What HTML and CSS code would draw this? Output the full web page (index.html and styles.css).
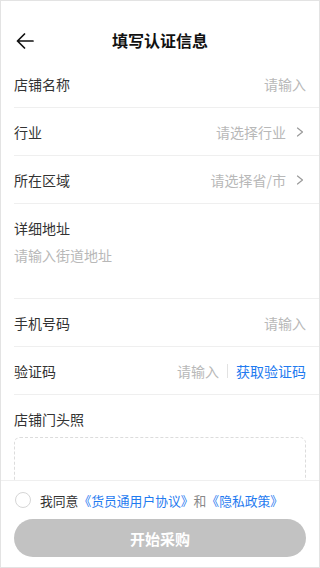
FILE: index.html
```html
<!DOCTYPE html>
<html lang="zh-CN">
<head>
<meta charset="utf-8">
<title>填写认证信息</title>
<link rel="stylesheet" href="styles.css">
</head>
<body>
<div class="screen">
  <header class="nav">
    <span class="back">
      <svg width="18" height="16" viewBox="0 0 18 16"><path d="M17 8H1.5M8.5 1L1.5 8l7 7" fill="none" stroke="#111" stroke-width="1.7" stroke-linecap="round" stroke-linejoin="round"/></svg>
    </span>
    <h1 class="title">填写认证信息</h1>
  </header>
  <main class="form">
    <div class="row">
      <span class="label">店铺名称</span>
      <span class="ph">请输入</span>
    </div>
    <div class="row">
      <span class="label">行业</span>
      <span class="ph">请选择行业</span>
      <svg class="chev" width="10" height="12" viewBox="0 0 10 12"><path d="M1.5 2l5 4-5 4" fill="none" stroke="#999" stroke-width="1.2" stroke-linecap="round" stroke-linejoin="round"/></svg>
    </div>
    <div class="row">
      <span class="label">所在区域</span>
      <span class="ph">请选择省/市</span>
      <svg class="chev" width="10" height="12" viewBox="0 0 10 12"><path d="M1.5 2l5 4-5 4" fill="none" stroke="#999" stroke-width="1.2" stroke-linecap="round" stroke-linejoin="round"/></svg>
    </div>
    <div class="row row-area">
      <span class="label">详细地址</span>
      <span class="ph">请输入街道地址</span>
    </div>
    <div class="row">
      <span class="label">手机号码</span>
      <span class="ph">请输入</span>
    </div>
    <div class="row">
      <span class="label">验证码</span>
      <span class="ph">请输入</span>
      <span class="sep"></span>
      <span class="link">获取验证码</span>
    </div>
    <div class="photo">
      <span class="label">店铺门头照</span>
      <div class="upload"></div>
    </div>
  </main>
  <footer class="footer">
    <div class="agree">
      <span class="check"></span>
      <span class="agree-text">我同意<span class="link">《货员通用户协议》</span><span class="and">和</span><span class="link">《隐私政策》</span></span>
    </div>
    <button class="btn">开始采购</button>
  </footer>
</div>
</body>
</html>
```

FILE: styles.css
```css
* { box-sizing: border-box; }
html, body { margin: 0; padding: 0; background: #fff; }
body {
  font-family: "Noto Sans CJK SC", "Noto Sans", sans-serif;
  color: #333;
}
.screen {
  width: 320px;
  height: 568px;
  border: 1px solid #e3e3e3;
  display: flex;
  flex-direction: column;
  overflow: hidden;
  background: #fff;
}
.nav {
  height: 59px;
  padding-top: 19px;
  display: flex;
  align-items: center;
  position: relative;
  flex: none;
}
.back {
  position: absolute;
  left: 15px;
  top: 32px;
  display: flex;
}
.title {
  margin: 0 auto;
  font-size: 16px;
  font-weight: 700;
  color: #111;
  line-height: 40px;
}
.form {
  flex: 1;
  overflow: hidden;
  margin-left: 13px;
}
.row {
  height: 48px;
  padding-top: 0;
  padding-right: 13px;
  border-bottom: 1px solid #efefef;
  display: flex;
  align-items: center;
  font-size: 14px;
}
.label {
  flex: 1;
  color: #333;
  font-size: 14px;
}
.ph {
  color: #b8b8b8;
}
.chev {
  margin-left: 10px;
}
.sep {
  width: 1px;
  height: 14px;
  background: #e2e2e2;
  margin: 0 8px;
}
.link {
  color: #1f7bf0;
}
.row-area {
  height: 95px;
  flex-direction: column;
  align-items: flex-start;
  padding-top: 13px;
}
.row-area .label {
  flex: none;
  line-height: 22px;
}
.row-area .ph {
  margin-top: 5px;
  line-height: 22px;
}
.photo {
  padding-top: 13px;
  padding-right: 13px;
}
.photo .label {
  display: block;
  line-height: 22px;
}
.upload {
  margin-top: 7px;
  height: 100px;
  border: 1px dashed #dcdcdc;
  border-radius: 6px;
}
.footer {
  flex: none;
  height: 87px;
  border-top: 1px solid #efefef;
  padding: 10px 13px 10px 13px;
  background: #fff;
}
.agree {
  height: 18px;
  display: flex;
  align-items: center;
  padding-left: 1px;
}
.check {
  width: 16px;
  height: 16px;
  border: 1px solid #d6d6d6;
  border-radius: 50%;
  margin-right: 9px;
  flex: none;
}
.agree-text {
  font-size: 12.8px;
  color: #333;
  white-space: nowrap;
}
.and {
  color: #888;
}
.btn {
  display: block;
  width: 100%;
  height: 38px;
  margin-top: 10px;
  border: none;
  border-radius: 19px;
  background: #c2c2c2;
  color: #fff;
  font-family: "Noto Sans CJK SC", "Noto Sans", sans-serif;
  font-size: 15px;
  font-weight: 700;
  padding: 0;
}
```
